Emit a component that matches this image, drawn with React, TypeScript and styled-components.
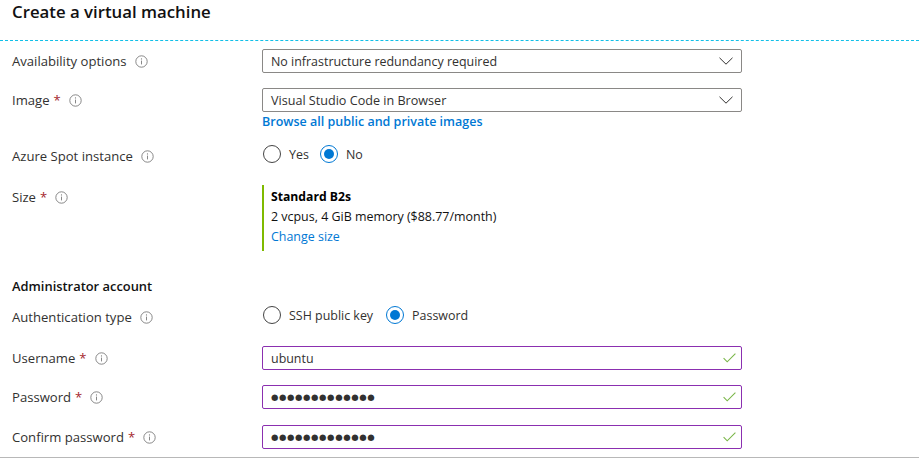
import React from "react";
import styled, { createGlobalStyle } from "styled-components";

const Global = createGlobalStyle`
  html, body { margin: 0; padding: 0; background: #fff; }
  body { font-family: "Open Sans", "Noto Sans", "Liberation Sans", sans-serif; font-size: 12.45px; color: #323130; }
`;

const Page = styled.div`
  width: 919px;
  height: 458px;
  box-sizing: border-box;
  overflow: hidden;
  border-bottom: 1px solid #b8b8b8;
`;

const Header = styled.header`
  height: 41px;
  box-sizing: border-box;
  border-bottom: 1px dashed #12bfe8;
  padding: 0 12px;
`;

const Title = styled.h1`
  margin: 0;
  font-size: 16.8px;
  line-height: 24px;
  font-weight: 600;
  color: #111;
`;

const Form = styled.form`
  display: flex;
  flex-direction: column;
  padding: 8px 0 0 12px;
`;

const Row = styled.div<{ $mt?: number; $h?: number }>`
  display: grid;
  grid-template-columns: 250px 480px;
  margin-top: ${(p) => p.$mt ?? 0}px;
  min-height: ${(p) => p.$h ?? 24}px;
`;

const Label = styled.div`
  display: flex;
  align-items: center;
  height: 24px;
  box-sizing: border-box;
  font-size: 13.1px;
  color: #323130;
  white-space: nowrap;
`;

const Star = styled.span`
  color: #a4262c;
  margin-left: 4px;
`;

const Info = styled.svg`
  margin-left: 8px;
  width: 13px;
  height: 13px;
  flex: none;
`;

const Field = styled.div<{ $color?: string }>`
  height: 24px;
  box-sizing: border-box;
  border: 1px solid ${(p) => p.$color ?? "#8a8886"};
  border-radius: 2px;
  display: flex;
  align-items: center;
  justify-content: space-between;
  padding: 0 8px;
  color: #323130;
`;

const ImageValue = styled.span`
  padding-top: 1px;
  font-size: 12.6px;
`;

const Dots = styled.span`
  font-family: "DejaVu Sans", sans-serif;
  font-size: 8.5px;
  letter-spacing: 0.6px;
  color: #323130;
`;

const Link = styled.a`
  display: block;
  color: #0078d4;
  text-decoration: none;
  line-height: 20px;
`;

const BoldLink = styled(Link)`
  line-height: 18px;
  margin-top: 1px;
  font-weight: 600;
  font-size: 12.5px;
`;

const RadioGroup = styled.div`
  display: flex;
  align-items: center;
  height: 20px;
  padding-left: 1px;
`;

const RadioItem = styled.label<{ $gap?: number }>`
  display: flex;
  align-items: center;
  margin-right: ${(p) => p.$gap ?? 12}px;
  color: #323130;
`;

const Circle = styled.span<{ $on?: boolean }>`
  width: 18px;
  height: 18px;
  box-sizing: border-box;
  border-radius: 50%;
  border: 1px solid ${(p) => (p.$on ? "#0078d4" : "#444")};
  margin-right: 8px;
  display: flex;
  align-items: center;
  justify-content: center;
  &::after {
    content: "";
    display: ${(p) => (p.$on ? "block" : "none")};
    width: 10px;
    height: 10px;
    border-radius: 50%;
    background: #0078d4;
  }
`;

const SizeCard = styled.div`
  border-left: 2px solid #7fba00;
  height: 66px;
  box-sizing: border-box;
  padding: 2px 0 0 7px;
  line-height: 20px;
  color: #111;
`;

const SizeName = styled.div`
  font-weight: 700;
  font-size: 12.2px;
  color: #000;
`;

const Section = styled.h2`
  margin: 25px 0 0;
  font-size: 12.9px;
  line-height: 20px;
  font-weight: 600;
  color: #111;
`;

const InfoIcon = () => (
  <Info viewBox="0 0 13 13" fill="none" aria-hidden>
    <circle cx="6.5" cy="6.5" r="5.7" stroke="#7a7a7a" strokeWidth="0.9" />
    <path d="M6.5 5.6v3.8" stroke="#7a7a7a" strokeWidth="0.9" />
    <circle cx="6.5" cy="3.9" r="0.6" fill="#7a7a7a" />
  </Info>
);

const ChevronIcon = styled.svg`
  width: 14px;
  height: 8px;
`;

const Chevron = () => (
  <ChevronIcon viewBox="0 0 14 8" fill="none" aria-hidden>
    <path d="M0.5 0.8 7 7.2 13.5 0.8" stroke="#323130" strokeWidth="1" />
  </ChevronIcon>
);

const CheckIcon = styled.svg`
  width: 13px;
  height: 10px;
  margin-right: -3px;
`;

const Check = () => (
  <CheckIcon viewBox="0 0 13 10" fill="none" aria-hidden>
    <path d="M0.6 5.2 4.2 8.8 12.4 0.6" stroke="#7ab648" strokeWidth="1.1" />
  </CheckIcon>
);

const Lbl = ({ text, req }: { text: string; req?: boolean }) => (
  <Label>
    {text}
    {req && <Star>*</Star>}
    <InfoIcon />
  </Label>
);

export default function App() {
  return (
    <Page>
      <Global />
      <Header>
        <Title>Create a virtual machine</Title>
      </Header>
      <Form>
        <Row>
          <Lbl text="Availability options" />
          <Field>
            No infrastructure redundancy required
            <Chevron />
          </Field>
        </Row>
        <Row $mt={15}>
          <Lbl text="Image" req />
          <div>
            <Field>
              <ImageValue>Visual Studio Code in Browser</ImageValue>
              <Chevron />
            </Field>
            <BoldLink href="#">Browse all public and private images</BoldLink>
          </div>
        </Row>
        <Row $mt={13} $h={20}>
          <Lbl text="Azure Spot instance" />
          <RadioGroup>
            <RadioItem $gap={11}>
              <Circle />
              Yes
            </RadioItem>
            <RadioItem>
              <Circle $on />
              No
            </RadioItem>
          </RadioGroup>
        </Row>
        <Row $mt={17}>
          <Lbl text="Size" req />
          <SizeCard>
            <SizeName>Standard B2s</SizeName>
            <div>2 vcpus, 4 GiB memory ($88.77/month)</div>
            <Link href="#">Change size</Link>
          </SizeCard>
        </Row>
        <Section>Administrator account</Section>
        <Row $mt={9} $h={20}>
          <Lbl text="Authentication type" />
          <RadioGroup>
            <RadioItem $gap={13}>
              <Circle />
              SSH public key
            </RadioItem>
            <RadioItem>
              <Circle $on />
              Password
            </RadioItem>
          </RadioGroup>
        </Row>
        <Row $mt={17}>
          <Lbl text="Username" req />
          <Field $color="#8b2fb0">
            ubuntu
            <Check />
          </Field>
        </Row>
        <Row $mt={15}>
          <Lbl text="Password" req />
          <Field $color="#8b2fb0">
            <Dots>●●●●●●●●●●●●●</Dots>
            <Check />
          </Field>
        </Row>
        <Row $mt={16}>
          <Lbl text="Confirm password" req />
          <Field $color="#8b2fb0">
            <Dots>●●●●●●●●●●●●●</Dots>
            <Check />
          </Field>
        </Row>
      </Form>
    </Page>
  );
}
